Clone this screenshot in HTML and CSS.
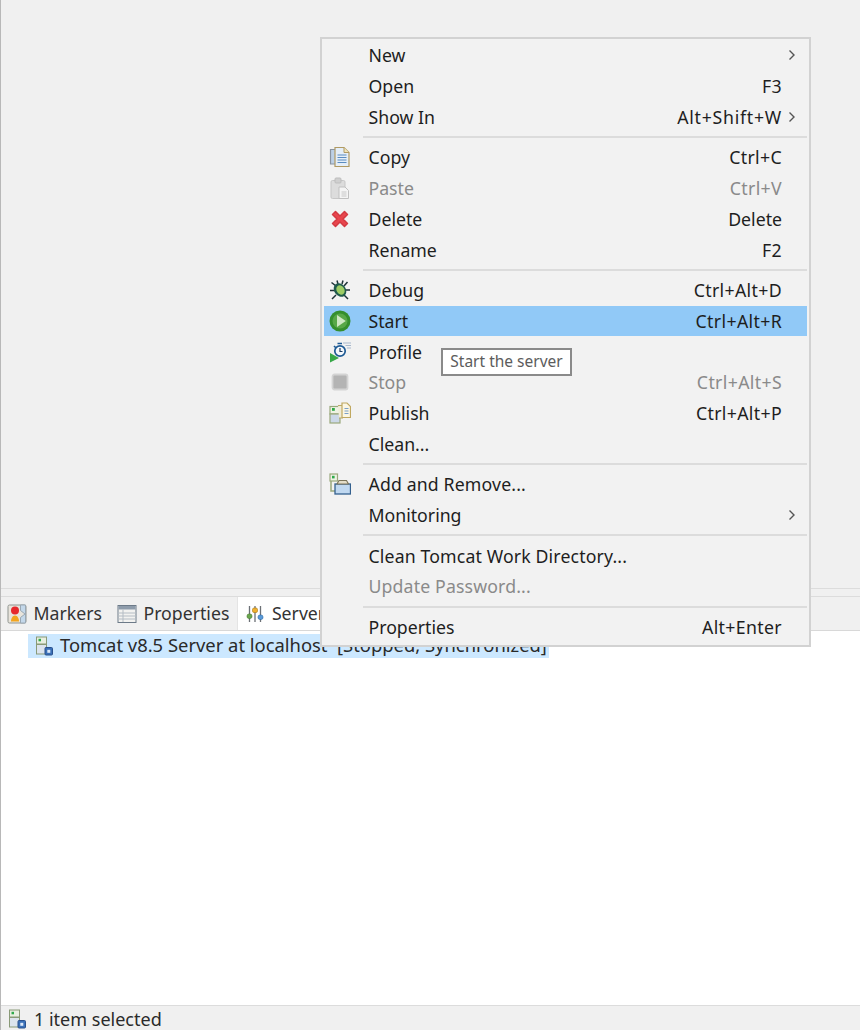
FILE: index.html
```html
<!DOCTYPE html>
<html lang="en">
<head>
<meta charset="utf-8">
<title>Servers</title>
<link rel="stylesheet" href="styles.css">
</head>
<body>
<div class="page">
  <div class="editor"></div>
  <div class="sash"></div>
  <div class="tabs">
    <div class="tab">
      <svg class="ico20" viewBox="0 0 20 20"><rect x="1" y="1" width="18" height="18" rx="1.5" fill="#e8e4dc" stroke="#8f9490"/><path d="M13.500 1v5.500l4.500 3.500-4.500 3.500v5.500h5v-18z" fill="#c4d8ea" stroke="#9aa8b4"/><circle cx="8" cy="6.500" r="4" fill="#e6282c"/><path d="M4 17.500c0-3 1.500-6 4-6s4 3 4 6z" fill="#f2a41e"/></svg>
      <span>Markers</span>
    </div>
    <div class="tab">
      <svg class="ico20" viewBox="0 0 20 20"><rect x="1" y="1.500" width="18" height="17" fill="#f2f2f0" stroke="#6c7a88"/><rect x="1.500" y="2" width="17" height="3.500" fill="#8e9cab"/><path d="M6 5.500V18M1 9h18M1 12h18M1 15h18" stroke="#b4bcc4" fill="none"/></svg>
      <span>Properties</span>
    </div>
    <div class="tab tab-active">
      <svg class="ico18" viewBox="0 0 18 18"><path d="M3.500 1v16M9 1v16M14.500 1v16" stroke="#6c7076" stroke-width="1.300" fill="none"/><rect x="1" y="9" width="5" height="4.500" rx="2" fill="#6aa84f" stroke="#4a7a30" stroke-width=".6"/><rect x="6.500" y="3" width="5" height="4.500" rx="1.500" fill="#f0b030" stroke="#a87810" stroke-width=".6"/><rect x="12" y="10" width="5" height="4.500" rx="2" fill="#5a9ad8" stroke="#2a6aa8" stroke-width=".6"/></svg>
      <span>Servers</span>
    </div>
  </div>
  <div class="tree">
    <div class="tree-row">
      <svg class="ico18" viewBox="0 0 18 20"><rect x="1.500" y="1" width="10" height="7" fill="#e8efe0" stroke="#8a9a78"/><rect x="3.500" y="2.800" width="2.500" height="2.500" fill="#2eaa4a"/><rect x="1.500" y="8.500" width="10" height="9.500" fill="#dce4ee" stroke="#8a9a78"/><rect x="10" y="11.500" width="7.500" height="7.500" rx="1" fill="#3a70b8" stroke="#2a508c"/><rect x="12.300" y="13.800" width="3" height="3" fill="#dce8f8"/></svg>
      <span>Tomcat v8.5 Server at localhost&nbsp;&nbsp;[Stopped, Synchronized]</span>
    </div>
  </div>
  <div class="status">
    <svg class="ico18" viewBox="0 0 18 20"><rect x="1.500" y="1" width="10" height="7" fill="#e8efe0" stroke="#8a9a78"/><rect x="3.500" y="2.800" width="2.500" height="2.500" fill="#2eaa4a"/><rect x="1.500" y="8.500" width="10" height="9.500" fill="#dce4ee" stroke="#8a9a78"/><rect x="10" y="11.500" width="7.500" height="7.500" rx="1" fill="#3a70b8" stroke="#2a508c"/><rect x="12.300" y="13.800" width="3" height="3" fill="#dce8f8"/></svg>
    <span>1 item selected</span>
  </div>
</div>

<div class="menu">
  <div class="row"><span class="cell-icon"></span><span class="label">New</span><span class="key"></span><span class="arrow"><svg viewBox="0 0 8 12"><path d="M1.500 1.500L6 6l-4.500 4.500" fill="none" stroke="#555" stroke-width="1.400"/></svg></span></div>
  <div class="row"><span class="cell-icon"></span><span class="label">Open</span><span class="key">F3</span><span class="arrow"></span></div>
  <div class="row"><span class="cell-icon"></span><span class="label">Show In</span><span class="key key-wide">Alt+Shift+W</span><span class="arrow"><svg viewBox="0 0 8 12"><path d="M1.500 1.500L6 6l-4.500 4.500" fill="none" stroke="#555" stroke-width="1.400"/></svg></span></div>
  <div class="sep"></div>
  <div class="row"><span class="cell-icon"><svg viewBox="0 0 22 22"><path d="M1.500 3.500h9l1 1v13.500h-10z" fill="#bcd0e6" stroke="#8a94a0" stroke-width="1.200"/><path d="M6 1.500h9l5 5v14h-14z" fill="#e4eef8" stroke="#b09a64" stroke-width="1.200"/><path d="M15 1.500v5h5" fill="#f0e4b8" stroke="#b09a64"/><path d="M8.500 9h9M8.500 11.500h9M8.500 14h9M8.500 16.500h9" stroke="#5a8cc0" stroke-width="1.100"/></svg></span><span class="label">Copy</span><span class="key">Ctrl+C</span><span class="arrow"></span></div>
  <div class="row off"><span class="cell-icon"><svg viewBox="0 0 22 22"><rect x="2" y="3.500" width="14" height="18" rx="1.500" fill="#dcdcdc" stroke="#c6c6c6"/><rect x="6" y="1" width="6" height="5" rx="1" fill="#cfcfcf" stroke="#bdbdbd"/><path d="M10 10h6l3.500 3.500v8h-9.500z" fill="#f4f4f4" stroke="#c0c0c0"/><path d="M12.500 15h5M12.500 17h5M12.500 19h5" stroke="#c8c8c8"/></svg></span><span class="label">Paste</span><span class="key">Ctrl+V</span><span class="arrow"></span></div>
  <div class="row"><span class="cell-icon"><svg viewBox="0 0 22 22"><path d="M3.500 6.500L6.500 3.500 11 8l4.500-4.500 3 3L14 11l4.500 4.500-3 3L11 14l-4.500 4.500-3-3L8 11z" fill="#e8464e" stroke="#d43a42" stroke-width="1.500" stroke-linejoin="round"/></svg></span><span class="label">Delete</span><span class="key key-plain">Delete</span><span class="arrow"></span></div>
  <div class="row"><span class="cell-icon"></span><span class="label">Rename</span><span class="key">F2</span><span class="arrow"></span></div>
  <div class="sep"></div>
  <div class="row"><span class="cell-icon"><svg viewBox="0 0 22 22"><path d="M7 7L2.500 3.500M6 11.500H1M7 16l-4 4M15 7l3.500-4M16 11h5M15 16l4 4M9 5L8 1.500M13 5l1-3.500" stroke="#1e3238" stroke-width="1.500" fill="none"/><ellipse cx="11" cy="11" rx="5.800" ry="7.300" transform="rotate(-35 11 11)" fill="#1f5a4c"/><ellipse cx="11.500" cy="11" rx="3.800" ry="5" transform="rotate(-35 11.500 11)" fill="#9ccc64"/></svg></span><span class="label">Debug</span><span class="key">Ctrl+Alt+D</span><span class="arrow"></span></div>
  <div class="row on"><span class="cell-icon"><svg viewBox="0 0 22 22"><circle cx="11" cy="11" r="10.500" fill="#358f2e"/><circle cx="11" cy="11" r="7.500" fill="#58a848"/><path d="M8 5l8.800 6L8 17z" fill="#cfe8c4"/></svg></span><span class="label">Start</span><span class="key">Ctrl+Alt+R</span><span class="arrow"></span></div>
  <div class="row"><span class="cell-icon"><svg viewBox="0 0 22 22"><path d="M1 12v9.500l9-4.500z" fill="#38a848"/><circle cx="11" cy="10" r="5.200" fill="#f4f8fc" stroke="#1e5a94" stroke-width="1.700"/><path d="M11 7v3.500h2.500" stroke="#1a3c64" stroke-width="1.200" fill="none"/><path d="M8.500 2.500h4.500M5 5l1.800 1.800" stroke="#1e5a94" stroke-width="1.600"/><path d="M14 2h8M16.500 4.500h5.500M18 7h4" stroke="#a8b8cc" stroke-width="1.100"/></svg></span><span class="label">Profile</span><span class="key"></span><span class="arrow"></span></div>
  <div class="row off"><span class="cell-icon"><svg viewBox="0 0 22 22"><rect x="3.500" y="3.500" width="15" height="15" rx="2" fill="#b4b4b4" stroke="#d4d4d4" stroke-width="1.800"/></svg></span><span class="label">Stop</span><span class="key">Ctrl+Alt+S</span><span class="arrow"></span></div>
  <div class="row"><span class="cell-icon"><svg viewBox="0 0 22 22"><rect x="1" y="4.500" width="10" height="7.500" fill="#eef2e4" stroke="#9aa87c" stroke-width="1.200"/><rect x="3" y="6" width="2.800" height="2.800" fill="#2eaa4a"/><rect x="1" y="12" width="10" height="9" fill="#ccd8e8" stroke="#9aa87c" stroke-width="1.200"/><path d="M9 3.500h5v12.500h-4" fill="#f0ecd8" stroke="#b8a868"/><path d="M13 1h5l3.500 3.500v11h-8.500z" fill="#fbf6e4" stroke="#c0a860" stroke-width="1.200"/><path d="M15.500 6.500h4M15.500 9h4M15.500 11.500h4" stroke="#7aa0c8"/></svg></span><span class="label">Publish</span><span class="key">Ctrl+Alt+P</span><span class="arrow"></span></div>
  <div class="row"><span class="cell-icon"></span><span class="label">Clean...</span><span class="key"></span><span class="arrow"></span></div>
  <div class="sep"></div>
  <div class="row"><span class="cell-icon"><svg viewBox="0 0 22 22"><rect x="1" y="1" width="7.500" height="7" fill="#eef2e4" stroke="#9aa87c" stroke-width="1.200"/><rect x="3" y="2.800" width="2.600" height="2.600" fill="#2eaa4a"/><path d="M2 8v10h4" fill="none" stroke="#9aa87c" stroke-width="1.500"/><rect x="6" y="11" width="15.500" height="10" fill="#c0d8f0" stroke="#34608e" stroke-width="1.300"/><path d="M8 11l2-3.500h7.500l2 3.500z" fill="#e4ddc8" stroke="#7c7458" stroke-width="1.100"/></svg></span><span class="label label-long">Add and Remove...</span><span class="key"></span><span class="arrow"></span></div>
  <div class="row"><span class="cell-icon"></span><span class="label">Monitoring</span><span class="key"></span><span class="arrow"><svg viewBox="0 0 8 12"><path d="M1.500 1.500L6 6l-4.500 4.500" fill="none" stroke="#555" stroke-width="1.400"/></svg></span></div>
  <div class="sep"></div>
  <div class="row"><span class="cell-icon"></span><span class="label label-long">Clean Tomcat Work Directory...</span><span class="key"></span><span class="arrow"></span></div>
  <div class="row off"><span class="cell-icon"></span><span class="label label-long">Update Password...</span><span class="key"></span><span class="arrow"></span></div>
  <div class="sep"></div>
  <div class="row"><span class="cell-icon"></span><span class="label">Properties</span><span class="key">Alt+Enter</span><span class="arrow"></span></div>
</div>

<div class="tooltip">Start the server</div>
</body>
</html>
```
FILE: styles.css
```css
* { box-sizing: border-box; }
html, body { margin: 0; padding: 0; height: 100%; overflow: hidden; }
body {
  background: #f0f0f0;
  color: #222;
  font-family: "Noto Sans", sans-serif;
  font-size: 17.7px;
  position: relative;
}
svg { filter: blur(0.35px); }
.page {
  height: 1030px;
  display: flex;
  flex-direction: column;
  border-left: 1px solid #b8b8b8;
}
.editor { height: 588px; flex: none; background: #f0f0f0; }
.sash {
  height: 9px;
  flex: none;
  background: #f0f0f0;
  border-top: 1px solid #dcdcdc;
  border-bottom: 1px solid #dcdcdc;
}
.tabs {
  height: 34px;
  flex: none;
  display: flex;
  align-items: stretch;
  padding-left: 5px;
  background: #f0f0f0;
  border-bottom: 1px solid #d8d8d8;
  color: #333;
}
.tab {
  display: flex;
  align-items: center;
  gap: 6.5px;
  padding: 0 8px 0 1px;
  white-space: nowrap;
}
.tab span { padding-bottom: 2px; }
.tab + .tab { margin-left: 6px; }
.tab + .tab.tab-active {
  background: #fff;
  padding: 0 20px 0 8px;
  margin-left: 0;
  gap: 7.5px;
  border-left: 1px solid #e4e4e4;
}
.ico20 { width: 20px; height: 20px; flex: none; }
.ico18 { width: 18px; height: 20px; flex: none; }
.tree { height: 374px; flex: none; background: #fff; padding: 3px 0 0 27px; }
.tree-row {
  display: inline-flex;
  align-items: center;
  gap: 7px;
  height: 24px;
  padding: 0 2px 0 7px;
  background: #cce8ff;
  font-size: 18.4px;
  color: #2a2a2a;
  white-space: nowrap;
}
.tree-row span { padding-bottom: 3px; }
.status {
  flex: 1;
  display: flex;
  align-items: center;
  gap: 8px;
  padding: 1px 0 0 7px;
  background: #f0f0f0;
  border-top: 1px solid #dcdcdc;
  font-size: 18px;
  line-height: 22px;
  color: #2a2a2a;
}
.menu {
  position: absolute;
  left: 320px;
  top: 37px;
  width: 491px;
  height: 610px;
  padding: 1px 2px 0;
  background: #f2f2f2;
  border: 2px solid #d2d2d2;
  color: #1e1e1e;
}
.row {
  display: flex;
  align-items: center;
  height: 30.75px;
  white-space: nowrap;
}
.row.on { background: #91c9f7; }
.row.off { color: #8a8a8a; }
.cell-icon {
  width: 44.5px;
  flex: none;
  display: flex;
  padding-left: 4.5px;
}
.cell-icon svg { width: 22px; height: 22px; display: block; }
.label { flex: 1; }
.label-long { letter-spacing: 0.14px; }
.key { flex: none; letter-spacing: 0.35px; }
.key-plain { letter-spacing: 0; }
.key-wide { letter-spacing: 0.75px; }
.arrow {
  width: 25px;
  flex: none;
  display: flex;
  justify-content: flex-end;
  padding-right: 11px;
}
.arrow svg { width: 8px; height: 12px; display: block; }
.sep {
  height: 9.75px;
  margin-left: 39px;
  display: flex;
  align-items: center;
}
.sep::before {
  content: "";
  display: block;
  width: 100%;
  height: 2px;
  background: #dcdcdc;
}
.tooltip {
  position: absolute;
  left: 441px;
  top: 348px;
  width: 131px;
  height: 28px;
  display: flex;
  align-items: center;
  justify-content: center;
  padding-bottom: 3px;
  background: #fff;
  border: 2px solid #8a8a8a;
  color: #5c5c5c;
  font-size: 15.5px;
  white-space: nowrap;
}
```
